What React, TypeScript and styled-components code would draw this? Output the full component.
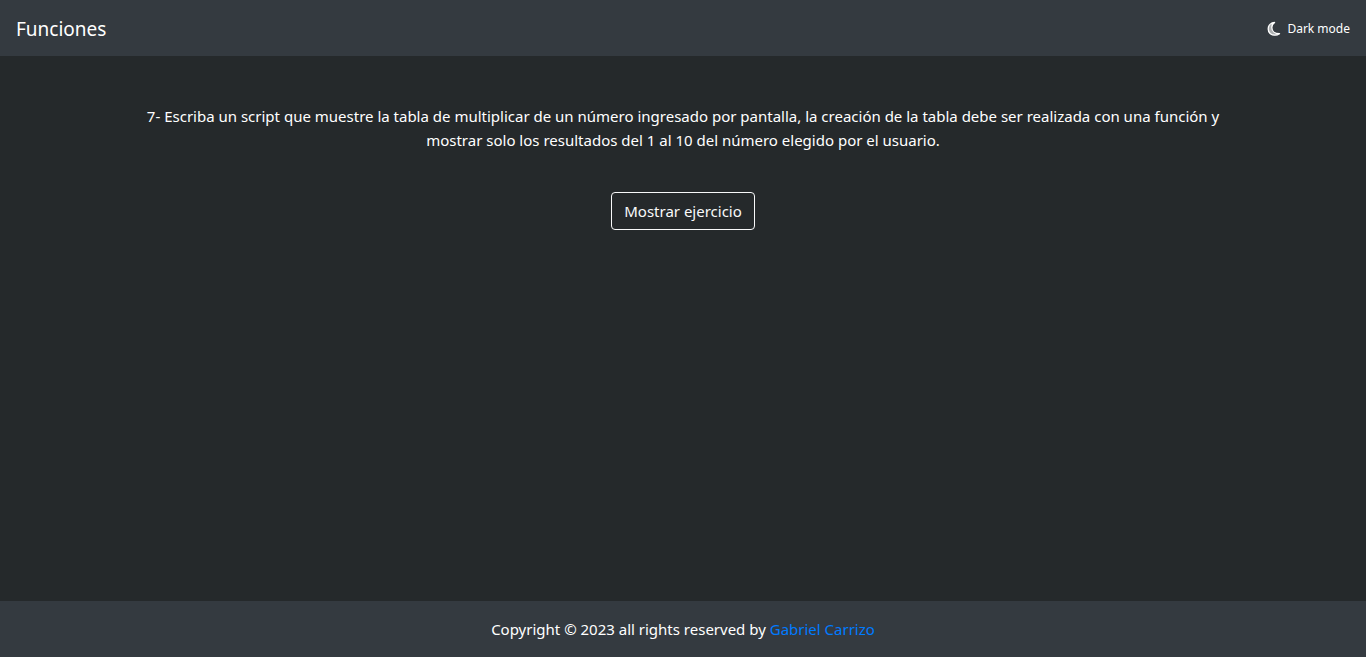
import React from "react";
import styled, { createGlobalStyle } from "styled-components";

const GlobalStyle = createGlobalStyle`
  *, *::before, *::after { box-sizing: border-box; }
  body {
    margin: 0;
    background: #25292b;
    color: #fff;
    font-family: "Noto Sans", sans-serif;
    font-size: 15px;
    line-height: 24px;
  }
`;

const Page = styled.div`
  display: flex;
  flex-direction: column;
  min-height: 100vh;
`;

const Navbar = styled.header`
  display: flex;
  align-items: center;
  justify-content: space-between;
  padding: 10px 16px 8px;
  min-height: 56px;
  background: #343a40;
`;

const Brand = styled.a`
  color: #fff;
  font-size: 19px;
  line-height: 32px;
  text-decoration: none;
`;

const ModeButton = styled.button`
  display: flex;
  align-items: center;
  gap: 6px;
  padding: 0;
  border: 0;
  background: none;
  color: #fff;
  font: inherit;
  font-size: 12px;
  cursor: pointer;
`;

const Main = styled.main`
  flex: 1;
  display: flex;
  flex-direction: column;
  align-items: center;
  gap: 40px;
  width: 100%;
  max-width: 1140px;
  margin: 0 auto;
  padding: 48px 15px;
`;

const Statement = styled.p`
  margin: 0;
  text-align: center;
`;

const OutlineButton = styled.button`
  padding: 6px 12px;
  border: 1px solid #f8f9fa;
  border-radius: 4px;
  background: transparent;
  color: #f8f9fa;
  font: inherit;
  cursor: pointer;
`;

const Footer = styled.footer`
  padding: 16px;
  background: #343a40;
  text-align: center;
`;

const AuthorLink = styled.a`
  color: #007bff;
  text-decoration: none;
`;

const MoonIcon = () => (
  <svg width="14" height="16" viewBox="0 0 14 16" aria-hidden="true">
    <path
      d="M7.600 1.500C3.800 2 1.200 4.500 1.200 8C1.200 11.700 4 14.200 7.700 14.200C9.700 14.200 11.200 13.700 12.500 12.700C8.100 12.600 4.800 10.200 4.800 6.400C4.800 4.300 5.900 2.600 7.600 1.500Z"
      fill="currentColor"
      fillOpacity="0.6"
      stroke="currentColor"
      strokeWidth="1.300"
      strokeLinejoin="round"
    />
  </svg>
);

export default function App() {
  return (
    <Page>
      <GlobalStyle />
      <Navbar>
        <Brand href="#">Funciones</Brand>
        <ModeButton type="button">
          <MoonIcon />
          Dark mode
        </ModeButton>
      </Navbar>
      <Main>
        <Statement>
          7- Escriba un script que muestre la tabla de multiplicar de un número ingresado por pantalla, la creación de la tabla debe ser realizada con una función y mostrar solo los resultados del 1 al 10 del número elegido por el usuario.
        </Statement>
        <OutlineButton type="button">Mostrar ejercicio</OutlineButton>
      </Main>
      <Footer>
        Copyright © 2023 all rights reserved by <AuthorLink href="#">Gabriel Carrizo</AuthorLink>
      </Footer>
    </Page>
  );
}
